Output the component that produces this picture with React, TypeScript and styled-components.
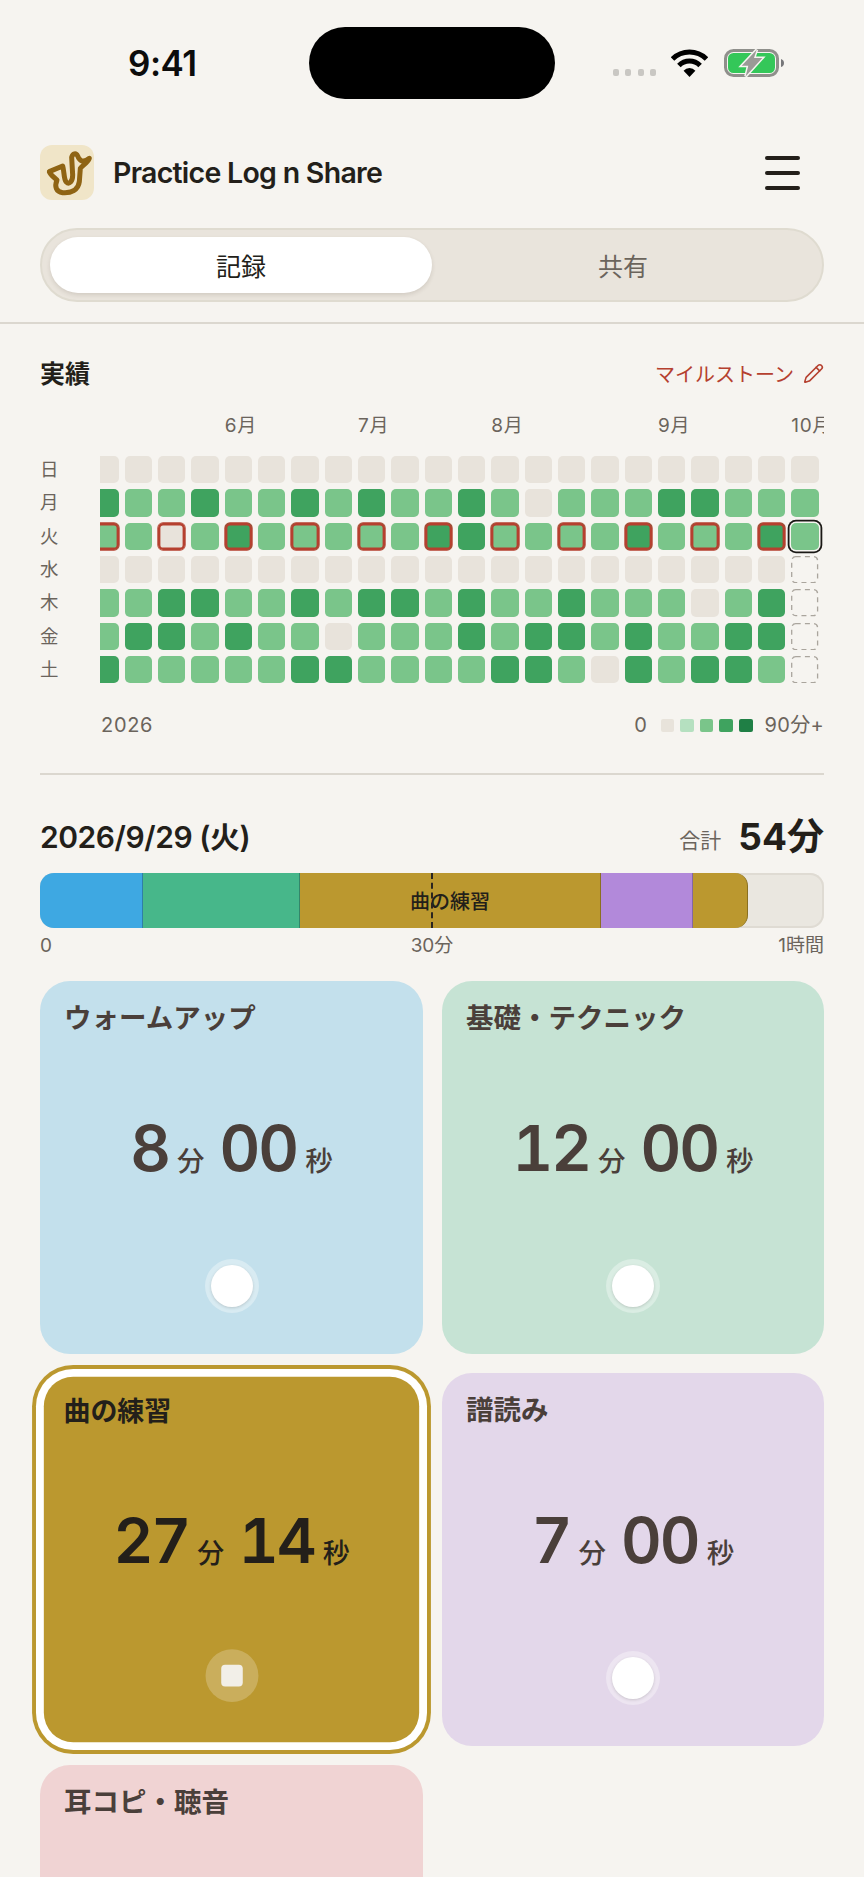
import React from 'react';
import styled, { createGlobalStyle } from 'styled-components';
import { Pencil } from 'lucide-react';

const GlobalStyle = createGlobalStyle`
  html, body {
    margin: 0;
    height: 100%;
    overflow: hidden;
    background: #f6f4f0;
  }
  body {
    font-family: Inter, "Noto Sans CJK JP", sans-serif;
    color: #231f1a;
  }
  * { box-sizing: border-box; }
`;

const Page = styled.div`
  width: 864px;
  height: 1877px;
  overflow: hidden;
  background: #f6f4f0;
`;

/* status bar */
const StatusBar = styled.div`
  height: 145px;
  padding: 27px 0 0 128px;
  display: flex;
  align-items: flex-start;
`;

const Clock = styled.div`
  width: 181px;
  height: 72px;
  line-height: 72px;
  font-size: 35px;
  font-weight: 600;
  letter-spacing: -0.5px;
  color: #0c0c0c;
`;

const Island = styled.div`
  width: 246px;
  height: 72px;
  border-radius: 36px;
  background: #000;
`;

const Indicators = styled.div`
  display: flex;
  align-items: flex-end;
  margin: 22px 0 0 58px;
`;

const SignalDots = styled.div`
  display: flex;
  gap: 6.4px;
  margin-bottom: 1px;
`;

const SignalDot = styled.span`
  width: 6px;
  height: 7px;
  border-radius: 2px;
  background: #c9c7c3;
`;

const WifiIcon = styled.svg`
  width: 37px;
  height: 28px;
  margin-left: 15px;
`;

const BatteryIcon = styled.svg`
  width: 60px;
  height: 28px;
  margin-left: 16px;
`;

/* app header */
const Header = styled.header`
  height: 55px;
  padding: 0 65px 0 40px;
  display: flex;
  align-items: center;
`;

const AppIcon = styled.svg`
  width: 54px;
  height: 55px;
  border-radius: 12px;
  background: #f0e5c8;
`;

const AppName = styled.h1`
  margin: 0 auto 0 19px;
  font-size: 28.5px;
  font-weight: 600;
  letter-spacing: -0.72px;
  color: #231f1a;
`;

const MenuButton = styled.div`
  width: 35px;
  margin-right: -1px;
  display: flex;
  flex-direction: column;
  gap: 11px;
`;

const MenuLine = styled.span`
  height: 4px;
  border-radius: 2px;
  background: #231f1a;
`;

/* tabs */
const Tabs = styled.div`
  margin: 28px 40px 0;
  height: 74px;
  padding: 7px 8px;
  display: flex;
  border-radius: 37px;
  background: #e9e4dc;
  border: 2px solid #dfdbd0;
`;

const Tab = styled.div<{ $active?: boolean }>`
  width: 382px;
  display: flex;
  align-items: center;
  justify-content: center;
  font-size: 25px;
  border-radius: 28px;
  color: ${(p) => (p.$active ? '#231f1a' : '#6b645c')};
  background: ${(p) => (p.$active ? '#fff' : 'transparent')};
  box-shadow: ${(p) => (p.$active ? '0 2px 4px rgba(70, 60, 40, 0.14)' : 'none')};
`;

const Rule = styled.div`
  height: 2px;
  margin-top: 20px;
  background: #dbd7cf;
`;

/* heat map */
const Section = styled.section`
  padding: 33px 40px 0;
`;

const TitleRow = styled.div`
  height: 30px;
  display: flex;
  align-items: center;
  justify-content: space-between;
`;

const SectionTitle = styled.h2`
  margin: 0;
  font-size: 25px;
  font-weight: 700;
  color: #231f1a;
`;

const MilestoneLink = styled.div`
  margin-top: 2px;
  display: flex;
  align-items: center;
  gap: 9px;
  font-size: 20px;
  color: #b5402f;
`;

const HeatMap = styled.div`
  margin-top: 27px;
  display: flex;
`;

const DayColumn = styled.div`
  width: 60px;
  padding-top: 42px;
  display: grid;
  grid-auto-rows: 27.33px;
  row-gap: 6px;
`;

const DayLabel = styled.div`
  line-height: 27.33px;
  font-size: 18.5px;
  color: #6b645c;
`;

const ScrollArea = styled.div`
  width: 724px;
  overflow: hidden;
`;

const ScrollInner = styled.div`
  margin-left: -8.67px;
`;

const MonthRow = styled.div`
  height: 24px;
  margin-bottom: 18px;
  display: grid;
  grid-template-columns: repeat(22, 27.33px);
  column-gap: 6px;
`;

const MonthLabel = styled.div<{ $col: number }>`
  grid-column: ${(p) => p.$col + 1};
  line-height: 24px;
  font-size: 19px;
  letter-spacing: 0.7px;
  white-space: nowrap;
  color: #6b645c;
`;

const CellGrid = styled.div`
  display: grid;
  grid-template-columns: repeat(22, 27.33px);
  grid-auto-rows: 27.33px;
  gap: 6px;
`;

const levelColors = ['#e8e3db', '#b5e0c0', '#7ac58a', '#3fa35f', '#1f7f45'];

const Cell = styled.div<{ $level: number; $mark?: boolean; $today?: boolean; $future?: boolean }>`
  border-radius: 5px;
  background: ${(p) => (p.$future ? 'transparent' : levelColors[p.$level])};
  box-shadow: ${(p) => {
    if (p.$today) return '0 0 0 1.5px #f6f4f0, 0 0 0 3.3px #1a1815';
    if (p.$mark) return 'inset 0 0 0 2.4px #b5402f, 0 0 0 0.7px #b5402f';
    return 'none';
  }};
`;

const FutureOutline = styled.svg`
  display: block;
  width: 100%;
  height: 100%;
`;

const MapFooter = styled.div`
  margin: 30px 0 0 61px;
  height: 24px;
  display: flex;
  align-items: center;
  justify-content: space-between;
  line-height: 24px;
  font-size: 20px;
  letter-spacing: 0.7px;
  color: #6b645c;
`;

const Legend = styled.div`
  display: flex;
  align-items: center;
`;

const LegendSwatch = styled.span<{ $level: number }>`
  width: 13.6px;
  height: 13.6px;
  margin-right: 6px;
  border-radius: 2px;
  background: ${(p) => levelColors[p.$level]};
`;

const LegendZero = styled.span`
  margin-right: 13px;
`;

const LegendMax = styled.span`
  margin-left: 6px;
  letter-spacing: 0.3px;
`;

const SectionRule = styled.div`
  height: 2px;
  margin: 36px 40px 0;
  background: #dbd7cf;
`;

/* day summary */
const DayRow = styled.div`
  margin: 35px 40px 0;
  height: 50px;
  display: flex;
  align-items: center;
`;

const DayTitle = styled.div`
  margin: 0 auto 0 0;
  font-size: 30px;
  font-weight: 600;
  letter-spacing: -0.45px;
`;

const TotalLabel = styled.span`
  margin: 8px 17px 0 0;
  font-size: 21px;
  color: #6b645c;
`;

const TotalValue = styled.span`
  margin-top: -3px;
  font-size: 37px;
  font-weight: 700;
`;

const TimeBar = styled.div`
  position: relative;
  margin: 13px 40px 0;
  height: 55px;
  display: flex;
  overflow: hidden;
  border-radius: 14px;
  background: #eae7e0;
  box-shadow: inset 0 0 0 2px #dfdbd3;
`;

const BarSegment = styled.div<{ $width: number; $color: string; $edge: string; $last?: boolean }>`
  width: ${(p) => p.$width}px;
  display: flex;
  align-items: center;
  justify-content: center;
  font-size: 20px;
  font-weight: 500;
  color: #231f1a;
  background: ${(p) => p.$color};
  border-right: 1px solid ${(p) => p.$edge};
  border-radius: ${(p) => (p.$last ? '0 13px 13px 0' : '0')};
`;

const HalfMark = styled.div`
  position: absolute;
  top: 0;
  bottom: 0;
  left: 391px;
  border-left: 2px dashed #2a2520;
`;

const BarAxis = styled.div`
  margin: 6px 40px 0;
  height: 24px;
  display: grid;
  grid-template-columns: 1fr auto 1fr;
  line-height: 24px;
  font-size: 19px;
  color: #6b645c;
`;

const AxisEnd = styled.span`
  text-align: right;
`;

/* category cards */
const CardGrid = styled.div`
  margin: 23px 40px 0;
  display: grid;
  grid-template-columns: 383px 382px;
  grid-auto-rows: 373px;
  gap: 19px;
`;

const Card = styled.div<{ $bg: string; $running?: boolean }>`
  padding: 18px 24px 18px ${(p) => (p.$running ? 20 : 24)}px;
  display: flex;
  flex-direction: column;
  border-radius: 30px;
  background: ${(p) => p.$bg};
  color: ${(p) => (p.$running ? '#231f1a' : '#4a3f3a')};
  transform: ${(p) => (p.$running ? 'scale(0.98)' : 'none')};
  box-shadow: ${(p) => (p.$running ? `0 0 0 8px #fff, 0 0 0 12px ${p.$bg}` : 'none')};
`;

const CardLabel = styled.div<{ $running?: boolean }>`
  height: 34px;
  padding-top: ${(p) => (p.$running ? 0 : 2)}px;
  line-height: 34px;
  font-size: 27.5px;
  font-weight: 600;
`;

const CardTime = styled.div<{ $running?: boolean }>`
  margin: 75px ${(p) => (p.$running ? -4 : 0)}px 0 0;
  height: 80px;
  line-height: 80px;
  display: flex;
  align-items: baseline;
  justify-content: center;
`;

const Digits = styled.span`
  font-size: 63px;
  font-weight: 600;
  font-variant-numeric: tabular-nums;
  letter-spacing: -2px;
`;

const Unit = styled.span<{ $trail?: boolean }>`
  margin: 0 ${(p) => (p.$trail ? 0 : 15)}px 0 8px;
  font-size: 27.5px;
  font-weight: 500;
`;

const RoundButton = styled.div<{ $running?: boolean }>`
  width: 54px;
  height: 54px;
  margin: 71px 0 0 ${(p) => (p.$running ? 4 : 0)}px;
  align-self: center;
  display: flex;
  align-items: center;
  justify-content: center;
  border-radius: 50%;
  background: ${(p) => (p.$running ? 'rgba(255, 255, 255, 0.22)' : 'rgba(255, 255, 255, 0.35)')};
`;

const StartDot = styled.span`
  width: 42px;
  height: 42px;
  border-radius: 50%;
  background: #fff;
  box-shadow: 0 1px 3px rgba(60, 60, 60, 0.2);
`;

const StopSquare = styled.span`
  width: 22px;
  height: 22px;
  border-radius: 4px;
  background: #f2efe8;
`;

const days = ['日', '月', '火', '水', '木', '金', '土'];
const months: [string, number][] = [['6月', 4], ['7月', 8], ['8月', 12], ['9月', 17], ['10月', 21]];

// one string per weekday, one char per week. f = not yet
const heatRows = [
  '0000000000000000000000',
  '3223223232232022233222',
  '2202322222332222322232',
  '000000000000000000000f',
  '223322323323223222023f',
  '233232202223233232233f',
  '322222332222332032332f',
];

const bars = [
  { width: 103, color: '#3ea8e2', edge: '#2f7fa8' },
  { width: 157, color: '#47b78a', edge: '#33866a' },
  { width: 301, color: '#bb982f', edge: '#8a7020', label: '曲の練習' },
  { width: 92, color: '#b289da', edge: '#8468a4' },
  { width: 55, color: '#bb982f', edge: '#8a7020', last: true },
];

const cards = [
  { name: 'ウォームアップ', min: '8', sec: '00', bg: '#c3e0ec' },
  { name: '基礎・テクニック', min: '12', sec: '00', bg: '#c6e3d4' },
  { name: '曲の練習', min: '27', sec: '14', bg: '#bb982f', running: true },
  { name: '譜読み', min: '7', sec: '00', bg: '#e3d7ea' },
  { name: '耳コピ・聴音', min: '3', sec: '00', bg: '#f0d3d3' },
];

const App = () => {
  return (
    <Page>
      <GlobalStyle />
      <StatusBar>
        <Clock>9:41</Clock>
        <Island />
        <Indicators>
          <SignalDots>
            <SignalDot />
            <SignalDot />
            <SignalDot />
            <SignalDot />
          </SignalDots>
          <WifiIcon viewBox="0 0 37 28">
            <path d="M1.5 10A24 24 0 0 1 35.5 10" fill="none" stroke="#000" strokeWidth="5" />
            <path d="M7.9 16.4A15 15 0 0 1 29.1 16.4" fill="none" stroke="#000" strokeWidth="5" />
            <path d="M18.5 28L12.6 21.7A8 8 0 0 1 24.4 21.7Z" fill="#000" />
          </WifiIcon>
          <BatteryIcon viewBox="0 0 60 28">
            <rect x="1.5" y="1.5" width="52" height="25" rx="8" fill="none" stroke="#8f8f8b" strokeWidth="3" />
            <rect x="4" y="4" width="47" height="20" rx="5.5" fill="#34c759" />
            <path d="M57 10Q60 11 60 14Q60 17 57 18Z" fill="#77777a" />
            <path
              d="M32.7 .7L17.7 16.7H24.3L21.7 27.3L38.3 8.9H30Z"
              fill="#9a9a96"
              stroke="#f6f4f0"
              strokeWidth="3"
              paintOrder="stroke"
            />
          </BatteryIcon>
        </Indicators>
      </StatusBar>

      <Header>
        <AppIcon viewBox="58 45 160 165">
          <path
            d="M85 125L125 108C130 125 128 145 135 155C145 165 155 155 155 135L152 82C155 70 165 68 170 78C175 92 185 100 205 85C200 100 185 105 178 115L175 155C172 180 150 190 125 188C105 185 100 170 108 150C100 142 88 135 85 125Z"
            fill="none"
            stroke="#8f6414"
            strokeWidth="15"
            strokeLinejoin="round"
          />
        </AppIcon>
        <AppName>Practice Log n Share</AppName>
        <MenuButton>
          <MenuLine />
          <MenuLine />
          <MenuLine />
        </MenuButton>
      </Header>

      <Tabs>
        <Tab $active>記録</Tab>
        <Tab>共有</Tab>
      </Tabs>
      <Rule />

      <Section>
        <TitleRow>
          <SectionTitle>実績</SectionTitle>
          <MilestoneLink>
            マイルストーン
            <Pencil size={21} strokeWidth={1.8} />
          </MilestoneLink>
        </TitleRow>
        <HeatMap>
          <DayColumn>
            {days.map((d) => (
              <DayLabel key={d}>{d}</DayLabel>
            ))}
          </DayColumn>
          <ScrollArea>
            <ScrollInner>
              <MonthRow>
                {months.map(([label, col]) => (
                  <MonthLabel key={label} $col={col}>{label}</MonthLabel>
                ))}
              </MonthRow>
              <CellGrid>
                {heatRows.map((row, r) =>
                  row.split('').map((c, i) => (
                    <Cell
                      key={`${r}-${i}`}
                      $level={c === 'f' ? 0 : Number(c)}
                      $future={c === 'f'}
                      $mark={r === 2 && i % 2 === 0}
                      $today={r === 2 && i === 21}
                    >
                      {c === 'f' && (
                        <FutureOutline viewBox="0 0 27.33 27.33">
                          <rect
                            x=".7"
                            y=".7"
                            width="25.9"
                            height="25.9"
                            rx="4"
                            fill="none"
                            stroke="#aaa59d"
                            strokeWidth="1.3"
                            strokeDasharray="5 4.2"
                          />
                        </FutureOutline>
                      )}
                    </Cell>
                  ))
                )}
              </CellGrid>
            </ScrollInner>
          </ScrollArea>
        </HeatMap>
        <MapFooter>
          2026
          <Legend>
            <LegendZero>0</LegendZero>
            {[0, 1, 2, 3, 4].map((l) => (
              <LegendSwatch key={l} $level={l} />
            ))}
            <LegendMax>90分+</LegendMax>
          </Legend>
        </MapFooter>
      </Section>
      <SectionRule />

      <DayRow>
        <DayTitle>2026/9/29 (火)</DayTitle>
        <TotalLabel>合計</TotalLabel>
        <TotalValue>54分</TotalValue>
      </DayRow>
      <TimeBar>
        {bars.map((b, i) => (
          <BarSegment key={i} $width={b.width} $color={b.color} $edge={b.edge} $last={b.last}>
            {b.label}
          </BarSegment>
        ))}
        <HalfMark />
      </TimeBar>
      <BarAxis>
        <span>0</span>
        <span>30分</span>
        <AxisEnd>1時間</AxisEnd>
      </BarAxis>

      <CardGrid>
        {cards.map((c) => (
          <Card key={c.name} $bg={c.bg} $running={c.running}>
            <CardLabel $running={c.running}>{c.name}</CardLabel>
            <CardTime $running={c.running}>
              <Digits>{c.min}</Digits>
              <Unit>分</Unit>
              <Digits>{c.sec}</Digits>
              <Unit $trail>秒</Unit>
            </CardTime>
            <RoundButton $running={c.running}>
              {c.running ? <StopSquare /> : <StartDot />}
            </RoundButton>
          </Card>
        ))}
      </CardGrid>
    </Page>
  );
};

export default App;
